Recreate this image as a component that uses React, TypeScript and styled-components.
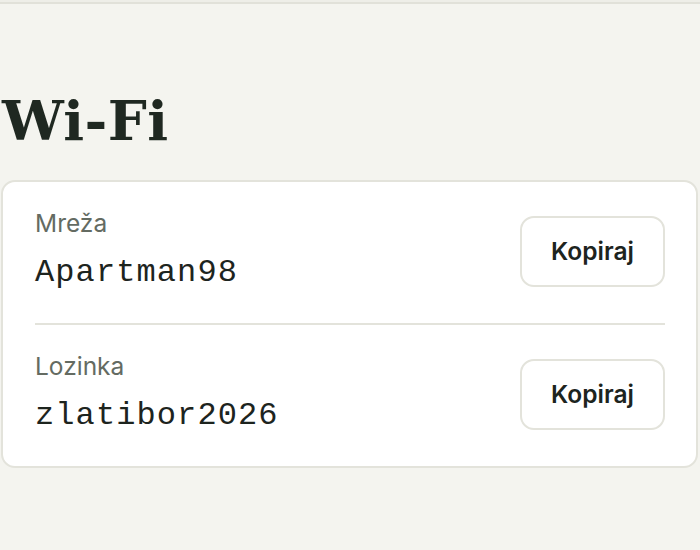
import React from 'react';
import styled, { createGlobalStyle } from 'styled-components';

const GlobalStyle = createGlobalStyle`
  html, body {
    margin: 0;
    padding: 0;
    background: #f4f4ef;
  }
  body {
    font-family: Inter, "Noto Sans", sans-serif;
    color: #1f2620;
  }
`;

const TopEdge = styled.div`
  height: 2px;
  background: #eeeee8;
  border-bottom: 2px solid #e1e1d9;
`;

const Section = styled.section`
  padding: 0 2px 0 1px;
`;

const Heading = styled.h2`
  margin: 89px 0 32px 1px;
  font-family: "DejaVu Serif", serif;
  font-weight: 700;
  font-size: 55px;
  line-height: 1;
  letter-spacing: 0.4px;
  color: #1f2821;
`;

const Card = styled.div`
  background: #ffffff;
  border: 2px solid #e3e3db;
  border-radius: 14px;
  padding: 0 31px 0 32px;
`;

const Row = styled.div<{ $divider?: boolean }>`
  display: flex;
  align-items: center;
  justify-content: space-between;
  height: 141px;
  border-bottom: ${({ $divider }) => ($divider ? '2px solid #e3e3db' : 'none')};
`;

const Info = styled.div`
  display: flex;
  flex-direction: column;
  gap: 19px;
  padding-bottom: 4px;
`;

const Label = styled.div`
  font-size: 24.5px;
  line-height: 1;
  color: #646b62;
`;

const Value = styled.div`
  font-family: "Liberation Mono", "DejaVu Sans Mono", monospace;
  font-size: 32px;
  line-height: 1.1;
  letter-spacing: 1.1px;
  color: #1d241e;
`;

const CopyButton = styled.button`
  width: 145px;
  height: 71px;
  margin-top: -3px;
  border: 2px solid #e3e3db;
  border-radius: 14px;
  background: #ffffff;
  font-family: Inter, "Noto Sans", sans-serif;
  font-weight: 600;
  font-size: 24.5px;
  color: #1d241e;
  cursor: pointer;
`;

const items = [
  { label: 'Mreža', value: 'Apartman98' },
  { label: 'Lozinka', value: 'zlatibor2026' },
];

export default function App() {
  return (
    <>
      <GlobalStyle />
      <TopEdge />
      <Section>
        <Heading>Wi-Fi</Heading>
        <Card>
          {items.map((item, i) => (
            <Row key={item.label} $divider={i < items.length - 1}>
              <Info>
                <Label>{item.label}</Label>
                <Value>{item.value}</Value>
              </Info>
              <CopyButton>Kopiraj</CopyButton>
            </Row>
          ))}
        </Card>
      </Section>
    </>
  );
}
